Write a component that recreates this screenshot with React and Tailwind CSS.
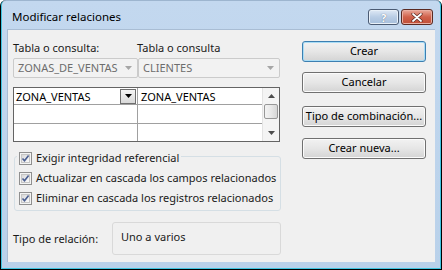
const font = { fontFamily: '"Noto Sans", "Open Sans", sans-serif' };

function CheckBox() {
  return (
    <span className="w-[13px] h-[13px] border border-[#8f8f8f] bg-[#f4f4f4] p-[1px] shrink-0">
      <span className="block w-full h-full border border-[#c6c6c6] bg-gradient-to-br from-[#d8d8d8] to-[#fbfbfb]">
        <svg viewBox="0 0 9 9" className="w-[9px] h-[9px] -mt-[1px] -ml-[1px]">
          <path d="M1.5 4.5 L3.5 6.8 L7.6 1.4" fill="none" stroke="#4b5f91" strokeWidth="1.6" />
        </svg>
      </span>
    </span>
  );
}

function Button({ children, primary }) {
  return (
    <div
      className={
        "h-[21px] rounded-[3px] border flex items-center justify-center whitespace-nowrap text-[11px] text-black bg-gradient-to-b from-[#f2f2f2] via-[#e6e6e6] to-[#d4d4d4] " +
        (primary
          ? "border-[#3c7fb1] shadow-[inset_0_0_0_1px_#a9dcf5]"
          : "border-[#707070] shadow-[inset_0_0_0_1px_#fbfbfb]")
      }
    >
      {children}
    </div>
  );
}

function Combo({ children, className }) {
  return (
    <div className={"h-[20px] border border-[#cbcbcb] rounded-[2px] bg-[#f2f2f2] flex items-center pl-[4px] pr-[5px] text-[11px] text-[#6d6d6d] whitespace-nowrap " + className}>
      <span className="flex-1">{children}</span>
      <svg viewBox="0 0 7 4" className="w-[7px] h-[4px]">
        <path d="M0 0 L7 0 L3.5 4 Z" fill="#a6a6a6" />
      </svg>
    </div>
  );
}

export default function App() {
  return (
    <div className="w-[442px] h-[270px] bg-black pb-px pr-px pl-px rounded-t-[6px]" style={font}>
      <div className="h-full rounded-t-[5px] border-x border-b border-[#3fc4e0] border-t border-t-[#9db5cf] bg-gradient-to-b from-[#c3d8ef] to-[#b9d1ea] flex flex-col">
        <div className="h-[28px] flex items-start pt-[8px] pl-[10px] pr-[7px]">
          <div className="flex-1 text-[11.5px] leading-[16px] text-black">Modificar relaciones</div>
          <div className="flex gap-[2px]">
            <div className="w-[31px] h-[16px] rounded-[3px] border border-[#4b5b73] bg-gradient-to-b from-[#dfe9f5] via-[#b9cde5] to-[#a5bedb] flex items-center justify-center shadow-[inset_0_0_0_1px_#e8f0f8]">
              <span className="text-[11px] leading-none font-bold text-white [text-shadow:0_0_1px_#44546b]">?</span>
            </div>
            <div className="w-[32px] h-[16px] rounded-[3px] border border-[#5a2a22] bg-gradient-to-b from-[#e9a99b] via-[#d0614b] to-[#c04e37] flex items-center justify-center shadow-[inset_0_0_0_1px_#eab0a3]">
              <svg viewBox="0 0 12 9" className="w-[12px] h-[9px]">
                <path d="M2 1 L10 8 M10 1 L2 8" stroke="#5a2a22" strokeWidth="3.2" strokeLinecap="round" />
                <path d="M2 1 L10 8 M10 1 L2 8" stroke="#ffffff" strokeWidth="1.8" strokeLinecap="round" />
              </svg>
            </div>
          </div>
        </div>
        <div className="flex-1 ml-[5px] mr-[5px] mb-[6px] bg-[#f0f0f0] border-l border-t border-[#a9bdd4] flex pl-[5px] pt-[10px] text-[11px] text-[#1a1a1a] whitespace-nowrap">
          <div className="w-[268px] flex flex-col">
            <div className="flex h-[15px] leading-[15px]">
              <span className="w-[124px]">Tabla o consulta:</span>
              <span>Tabla o consulta</span>
            </div>
            <div className="flex mt-[3px] w-[267px]">
              <Combo className="w-[125px]">ZONAS_DE_VENTAS</Combo>
              <Combo className="flex-1">CLIENTES</Combo>
            </div>
            <div className="mt-[9px] w-[267px] border border-[#646464] bg-white flex">
              <div className="w-[248px] flex flex-col">
                <div className="h-[17px] flex border-b border-[#a0a0a0]">
                  <div className="w-[124px] border-r border-[#a0a0a0] flex items-center pl-[2px] pr-[1px]">
                    <span className="flex-1 leading-none text-black">ZONA_VENTAS</span>
                    <span className="w-[16px] h-[15px] border border-[#6f6f6f] bg-gradient-to-b from-[#f4f4f4] to-[#d9d9d9] flex items-center justify-center">
                      <svg viewBox="0 0 7 4" className="w-[7px] h-[4px]">
                        <path d="M0 0 L7 0 L3.5 4 Z" fill="#000" />
                      </svg>
                    </span>
                  </div>
                  <div className="flex-1 flex items-center pl-[3px] leading-none text-black">ZONA_VENTAS</div>
                </div>
                <div className="h-[19px] flex border-b border-[#a0a0a0]">
                  <div className="w-[124px] border-r border-[#a0a0a0]" />
                </div>
                <div className="h-[17px] flex">
                  <div className="w-[124px] border-r border-[#a0a0a0]" />
                </div>
              </div>
              <div className="w-[17px] flex flex-col border-l border-[#e3e3e3] bg-[#f4f4f4]">
                <div className="h-[16px] flex items-center justify-center">
                  <svg viewBox="0 0 7 4" className="w-[7px] h-[4px]">
                    <path d="M0 4 L7 4 L3.5 0 Z" fill="#4d4d4d" />
                  </svg>
                </div>
                <div className="flex-1 px-px">
                  <div className="h-[15px] rounded-[2px] border border-[#979797] bg-gradient-to-r from-[#f3f3f3] via-[#e8e8e8] to-[#d6d6d6]" />
                </div>
                <div className="h-[17px] flex items-center justify-center">
                  <svg viewBox="0 0 7 4" className="w-[7px] h-[4px]">
                    <path d="M0 0 L7 0 L3.5 4 Z" fill="#4d4d4d" />
                  </svg>
                </div>
              </div>
            </div>
            <div className="mt-[14px] ml-px w-[267px] border border-[#d5dfe5] rounded-[3px] pl-[2px] pb-[4px] flex flex-col items-start">
              <div className="-mt-[7px] h-[16px] px-[2px] bg-[#f0f0f0] flex items-center gap-[4px]">
                <CheckBox />
                <span>Exigir integridad referencial</span>
              </div>
              <div className="mt-[4px] h-[16px] px-[2px] flex items-center gap-[4px]">
                <CheckBox />
                <span>Actualizar en cascada los campos relacionados</span>
              </div>
              <div className="mt-[4px] h-[16px] px-[2px] flex items-center gap-[4px]">
                <CheckBox />
                <span>Eliminar en cascada los registros relacionados</span>
              </div>
            </div>
            <div className="mt-[11px] flex items-center">
              <span className="w-[99px] pt-[2px]">Tipo de relación:</span>
              <div className="w-[169px] h-[33px] border border-[#d9d9d9] rounded-[3px] pl-[8px] pt-[6px] leading-[15px]">
                Uno a varios
              </div>
            </div>
          </div>
          <div className="w-[124px] ml-[21px] flex flex-col pt-[1px]">
            <Button primary>Crear</Button>
            <div className="mt-[10px]">
              <Button>Cancelar</Button>
            </div>
            <div className="mt-[13px]">
              <Button>Tipo de combinación...</Button>
            </div>
            <div className="mt-[11px]">
              <Button>Crear nueva...</Button>
            </div>
          </div>
        </div>
      </div>
    </div>
  );
}
